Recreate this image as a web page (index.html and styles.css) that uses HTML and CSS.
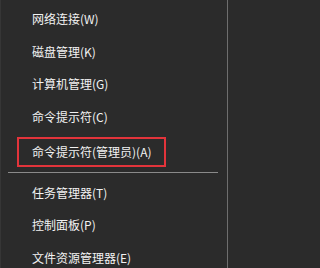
FILE: index.html
```html
<!DOCTYPE html>
<html lang="zh-CN">
<head>
<meta charset="utf-8">
<link rel="stylesheet" href="styles.css">
</head>
<body>
<div class="menu">
  <div class="item"><span class="label">网络连接(W)</span></div>
  <div class="item"><span class="label">磁盘管理(K)</span></div>
  <div class="item"><span class="label">计算机管理(G)</span></div>
  <div class="item"><span class="label">命令提示符(C)</span></div>
  <div class="item item-marked"><span class="mark"><span class="label">命令提示符(管理员)(A)</span></span></div>
  <div class="sep"></div>
  <div class="item"><span class="label">任务管理器(T)</span></div>
  <div class="item"><span class="label">控制面板(P)</span></div>
  <div class="item"><span class="label">文件资源管理器(E)</span></div>
</div>
</body>
</html>
```
FILE: styles.css
```css
html, body {
  margin: 0;
  padding: 0;
  background: #2b2b2b;
}
.menu {
  width: 228px;
  height: 268px;
  box-sizing: border-box;
  overflow: hidden;
  background: #2b2b2b;
  border-left: 1px solid #363636;
  border-right: 1px solid #6e6e6e;
  padding-top: 3px;
  display: flex;
  flex-direction: column;
  font-family: "Noto Sans CJK SC", "Noto Sans", sans-serif;
  font-size: 12px;
  color: #f2f2f2;
}
.item {
  height: 32.5px;
  flex: none;
  display: flex;
  align-items: center;
  padding-left: 31px;
}
.label {
  white-space: nowrap;
  line-height: 14px;
}
.item-marked {
  padding-left: 16px;
  align-items: flex-start;
}
.mark {
  margin-top: 4px;
  width: 149px;
  height: 30px;
  box-sizing: border-box;
  border: 2px solid #e3343b;
  display: flex;
  align-items: center;
  padding-left: 13px;
  padding-bottom: 1px;
}
.sep {
  flex: none;
  height: 1px;
  margin: 6px 9px 4px 7px;
  background: #8a8a8a;
}
```
